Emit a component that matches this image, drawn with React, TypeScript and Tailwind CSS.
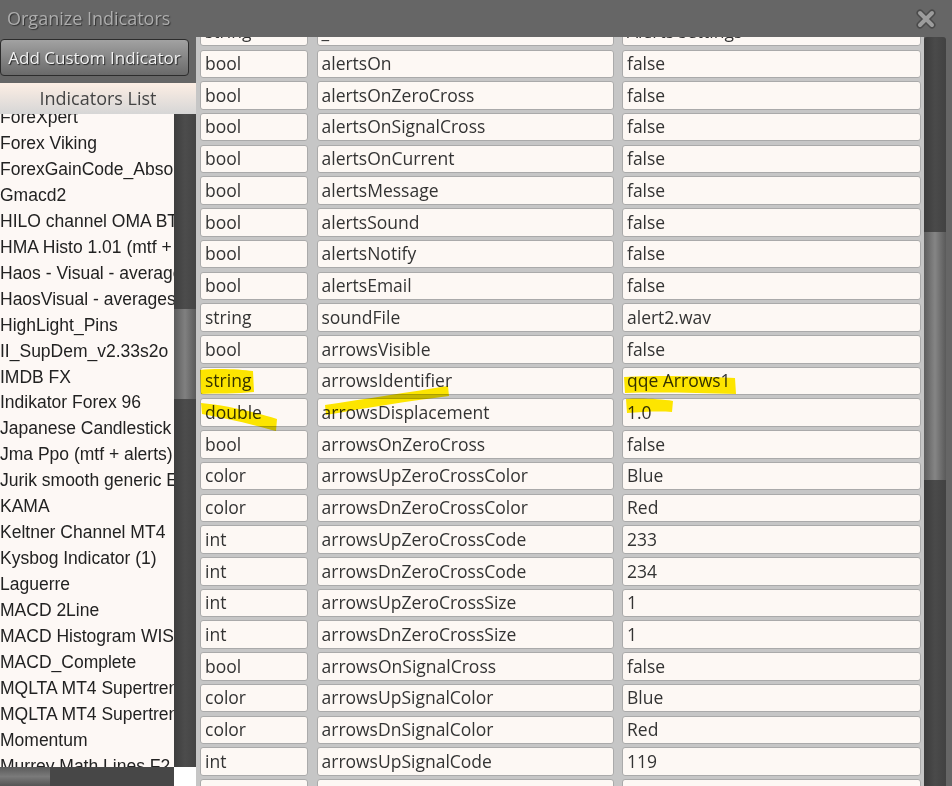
import React from "react";

type Param = [string, string, string];

const indicators = [
  "ForeXpert",
  "Forex Viking",
  "ForexGainCode_Absolute",
  "Gmacd2",
  "HILO channel OMA BT",
  "HMA Histo 1.01 (mtf + alerts)",
  "Haos - Visual - averages",
  "HaosVisual - averages nmc",
  "HighLight_Pins",
  "II_SupDem_v2.33s2o",
  "IMDB FX",
  "Indikator Forex 96",
  "Japanese Candlestick Patterns",
  "Jma Ppo (mtf + alerts) nmc",
  "Jurik smooth generic Ehlers",
  "KAMA",
  "Keltner Channel MT4",
  "Kysbog Indicator (1)",
  "Laguerre",
  "MACD 2Line",
  "MACD Histogram WISE",
  "MACD_Complete",
  "MQLTA MT4 Supertrend",
  "MQLTA MT4 Supertrend Line",
  "Momentum",
  "Murrey Math Lines F2",
];

const params: Param[] = [
  ["string", "_", "Alerts settings"],
  ["bool", "alertsOn", "false"],
  ["bool", "alertsOnZeroCross", "false"],
  ["bool", "alertsOnSignalCross", "false"],
  ["bool", "alertsOnCurrent", "false"],
  ["bool", "alertsMessage", "false"],
  ["bool", "alertsSound", "false"],
  ["bool", "alertsNotify", "false"],
  ["bool", "alertsEmail", "false"],
  ["string", "soundFile", "alert2.wav"],
  ["bool", "arrowsVisible", "false"],
  ["string", "arrowsIdentifier", "qqe Arrows1"],
  ["double", "arrowsDisplacement", "1.0"],
  ["bool", "arrowsOnZeroCross", "false"],
  ["color", "arrowsUpZeroCrossColor", "Blue"],
  ["color", "arrowsDnZeroCrossColor", "Red"],
  ["int", "arrowsUpZeroCrossCode", "233"],
  ["int", "arrowsDnZeroCrossCode", "234"],
  ["int", "arrowsUpZeroCrossSize", "1"],
  ["int", "arrowsDnZeroCrossSize", "1"],
  ["bool", "arrowsOnSignalCross", "false"],
  ["color", "arrowsUpSignalColor", "Blue"],
  ["color", "arrowsDnSignalColor", "Red"],
  ["int", "arrowsUpSignalCode", "119"],
  ["int", "arrowsDnSignalCode", "119"],
];

function Cell({ text }: { text: string }) {
  return (
    <div className="flex h-[28.5px] items-center overflow-hidden whitespace-nowrap rounded-[3px] border border-[#aaaaaa] bg-[#fdf8f4] px-[4px] text-[17.5px] leading-none text-[#333]">
      {text}
    </div>
  );
}

function CloseIcon() {
  return (
    <svg width="20" height="20" viewBox="0 0 20 20" className="mr-[16px]">
      <path
        d="M4 4 L16 16 M16 4 L4 16"
        stroke="#4a4a4a"
        strokeWidth="7"
        strokeLinecap="round"
        fill="none"
      />
      <path
        d="M4 4 L16 16 M16 4 L4 16"
        stroke="#9c9c9c"
        strokeWidth="4"
        strokeLinecap="round"
        fill="none"
      />
    </svg>
  );
}

export default function App() {
  return (
    <div className="relative flex h-[786px] w-[952px] flex-col overflow-hidden bg-[#666666] font-['Open_Sans',sans-serif]">
      {/* title bar */}
      <div className="flex h-[37px] shrink-0 items-center justify-between pl-[7px]">
        <span className="text-[18px] text-[#adadad] [text-shadow:1px_1px_1px_#333]">
          Organize Indicators
        </span>
        <CloseIcon />
      </div>

      <div className="flex min-h-0 flex-1">
        {/* left panel */}
        <div className="flex w-[196px] shrink-0 flex-col">
          <button className="mt-[2px] h-[37px] w-[189px] rounded-[4px] border border-[#2c2c2c] bg-linear-to-b from-[#a2a2a2] to-[#6a6a6a] text-[17px] font-medium text-[#f2f2f2] [text-shadow:1px_1px_1px_#222]">
            Add Custom Indicator
          </button>
          <div className="mt-[7px] flex h-[31px] items-center justify-center bg-linear-to-b from-[#fdeee4] to-[#d6d6d6] text-[18px] text-[#444]">
            Indicators List
          </div>
          <div className="flex min-h-0 flex-1">
            <div className="flex w-[174px] flex-col">
              <div className="min-h-0 flex-1 overflow-hidden bg-[#fdf8f5]">
                <div className="mt-[-9px] font-['Liberation_Sans',Arial,sans-serif] text-[17.5px] text-[#222]">
                  {indicators.map((name) => (
                    <div
                      key={name}
                      className="h-[25.96px] whitespace-nowrap leading-[25.96px]"
                    >
                      {name}
                    </div>
                  ))}
                </div>
              </div>
              <div className="flex h-[19px] bg-[#474747]">
                <div className="w-[50px] bg-linear-to-b from-[#5a5a5a] via-[#7a7a7a] to-[#555]" />
              </div>
            </div>
            <div className="flex w-[22px] flex-col">
              <div className="flex-1 bg-linear-to-r from-[#3e3e3e] via-[#4c4c4c] to-[#444]">
                <div className="mt-[195px] h-[90px] bg-linear-to-r from-[#5c5c5c] via-[#808080] to-[#5a5a5a]" />
              </div>
              <div className="h-[19px] bg-white" />
            </div>
          </div>
        </div>

        {/* parameters table */}
        <div className="min-w-0 flex-1 overflow-hidden bg-[#c6c6c6] pl-[4px] pr-[3px]">
          <div className="mt-[-19.2px] flex flex-col gap-[3.23px]">
            {params.map(([type, name, value], i) => (
              <div
                key={i}
                className="grid grid-cols-[108px_297px_299px] gap-x-[8.5px]"
              >
                <Cell text={type} />
                <Cell text={name} />
                <Cell text={value} />
              </div>
            ))}
          </div>
        </div>
        <div className="w-[22px] shrink-0 rounded-t-[3px] bg-linear-to-r from-[#3c3c3c] via-[#4a4a4a] to-[#424242]">
          <div className="mt-[195px] h-[248px] bg-linear-to-r from-[#5e5e5e] via-[#858585] to-[#5a5a5a]" />
        </div>
        <div className="w-[6px] shrink-0" />
      </div>

      {/* yellow marker strokes */}
      <svg
        className="pointer-events-none absolute inset-0 mix-blend-multiply"
        width="952"
        height="786"
      >
        <g fill="#ffec00" stroke="none">
          <path d="M200 370 C 215 368 240 369 253 371 L 254 392 C 238 394 215 393 201 394 Z" />
          <path d="M201 403 C 225 405 255 412 277 419 L 276 431 C 255 425 225 418 202 414 Z" />
          <path d="M325 405 C 365 399 410 392 448 386 L 449 396 C 410 401 365 408 326 415 Z" />
          <path d="M624 377 C 660 375 700 376 735 378 L 736 394 C 700 393 660 392 625 393 Z" />
          <path d="M626 399 C 642 398 660 399 673 401 L 672 412 C 658 411 642 412 627 413 Z" />
        </g>
      </svg>
    </div>
  );
}
